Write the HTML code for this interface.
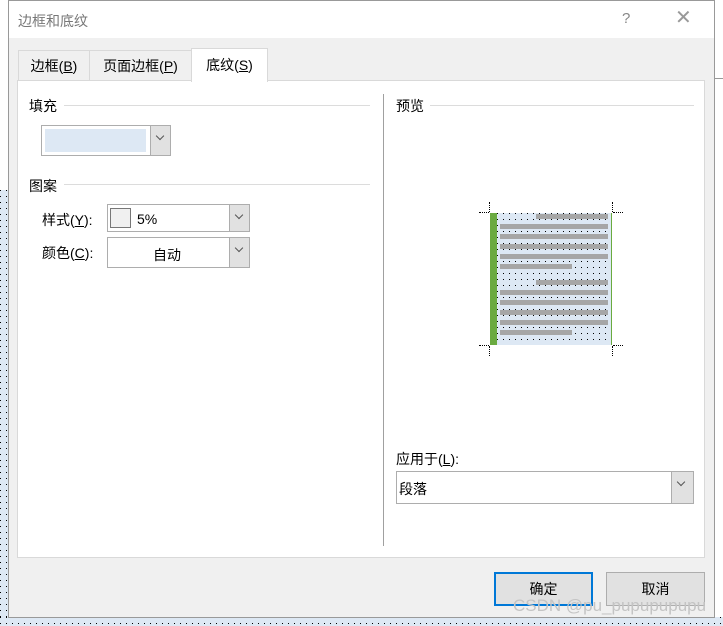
<!DOCTYPE html>
<html><head><meta charset="utf-8"><style>
*{margin:0;padding:0;box-sizing:border-box}
body{width:723px;height:626px;position:relative;overflow:hidden;background:#fff;font-family:"Liberation Sans","Noto Sans CJK SC",sans-serif;font-size:14px;color:#000}
.a{position:absolute}
.dots{background-color:#dde8f4;background-image:linear-gradient(#000,#000);background-size:1px 1px;background-repeat:no-repeat}
.dots{background-image:radial-gradient(circle at 0.5px 0.5px,#000 0.5px,transparent 0.6px);background-size:6px 6px;background-repeat:repeat}
.combo{position:absolute;border:1px solid #adadad;background:#fff}
.btn{position:absolute;right:0;top:0;bottom:0;width:20px;background:#e1e1e1;border-left:1px solid #adadad}
.btn:after{content:"";position:absolute;left:6px;top:7px;width:5px;height:5px;border-right:1px solid #555;border-bottom:1px solid #555;transform:rotate(45deg)}
.bar{position:absolute;height:5px;background:#a6a6a6}
</style></head><body>
<div class="a dots" style="left:0;top:190px;width:8px;height:436px"></div>
<div class="a dots" style="left:0;top:617px;width:723px;height:9px"></div>
<div class="a" style="left:714px;top:78px;width:9px;height:1px;background:#999"></div>
<div class="a" style="left:8px;top:0;width:707px;height:618px;border:1px solid #999;background:#f0f0f0">
 <div class="a" style="left:0;top:0;width:705px;height:37px;background:#fff"></div>
 <div class="a" style="left:9px;top:10px;font-size:14px;color:#777">边框和底纹</div>
 <div class="a" style="left:613px;top:9px;color:#888;font-size:15px">?</div>
 <div class="a" style="left:666px;top:6px;color:#999;font-size:20px;line-height:22px">✕</div>
</div>
<div class="a" style="left:18px;top:50px;width:72px;height:31px;border:1px solid #d9d9d9;border-bottom:none;background:#f0f0f0;text-align:center;line-height:31px">边框(<u>B</u>)</div>
<div class="a" style="left:89px;top:50px;width:103px;height:31px;border:1px solid #d9d9d9;border-bottom:none;background:#f0f0f0;text-align:center;line-height:31px">页面边框(<u>P</u>)</div>
<div class="a" style="left:17px;top:80px;width:688px;height:478px;border:1px solid #d9d9d9;background:#fff"></div>
<div class="a" style="left:191px;top:48px;width:77px;height:34px;border:1px solid #d9d9d9;border-bottom:none;background:#fff;text-align:center;line-height:33px">底纹(<u>S</u>)</div>
<div class="a" style="left:29px;top:96px">填充</div>
<div class="a" style="left:64px;top:105px;width:306px;height:1px;background:#dcdcdc"></div>
<div class="combo" style="left:41px;top:125px;width:130px;height:31px"><div class="a" style="left:3px;top:3px;width:101px;height:23px;background:#dde8f4"></div><div class="btn"></div></div>
<div class="a" style="left:29px;top:176px">图案</div>
<div class="a" style="left:64px;top:184px;width:306px;height:1px;background:#dcdcdc"></div>
<div class="a" style="left:42px;top:210px">样式(<u>Y</u>):</div>
<div class="combo" style="left:107px;top:204px;width:143px;height:28px"><div class="a" style="left:2px;top:3px;width:21px;height:20px;border:1px solid #777;background:#f0f0f0"></div><div class="a" style="left:29px;top:6px">5%</div><div class="btn"></div></div>
<div class="a" style="left:42px;top:243px">颜色(<u>C</u>):</div>
<div class="combo" style="left:107px;top:237px;width:143px;height:31px"><div class="a" style="left:45px;top:7px">自动</div><div class="btn"></div></div>
<div class="a" style="left:383px;top:94px;width:1px;height:452px;background:#a0a0a0"></div>
<div class="a" style="left:396px;top:96px">预览</div>
<div class="a" style="left:430px;top:105px;width:264px;height:1px;background:#dcdcdc"></div>
<div class="a dots" style="left:497px;top:213px;width:114px;height:132px"></div>
<div class="a" style="left:490px;top:213px;width:7px;height:132px;background:#6aaa40"></div>
<div class="a" style="left:611px;top:213px;width:1px;height:132px;background:#6aaa40"></div>
<div class="bar" style="left:536px;top:214px;width:72px"></div>
<div class="bar" style="left:500px;top:224px;width:108px"></div>
<div class="bar" style="left:500px;top:234px;width:108px"></div>
<div class="bar" style="left:500px;top:244px;width:108px"></div>
<div class="bar" style="left:500px;top:254px;width:108px"></div>
<div class="bar" style="left:500px;top:264px;width:72px"></div>
<div class="bar" style="left:536px;top:280px;width:72px"></div>
<div class="bar" style="left:500px;top:290px;width:108px"></div>
<div class="bar" style="left:500px;top:300px;width:108px"></div>
<div class="bar" style="left:500px;top:310px;width:108px"></div>
<div class="bar" style="left:500px;top:320px;width:108px"></div>
<div class="bar" style="left:500px;top:330px;width:72px"></div>
<div class="a" style="left:479px;top:212px;width:10px;border-top:1px dotted #000"></div>
<div class="a" style="left:489px;top:202px;height:10px;border-left:1px dotted #000"></div>
<div class="a" style="left:613px;top:212px;width:10px;border-top:1px dotted #000"></div>
<div class="a" style="left:612px;top:202px;height:10px;border-left:1px dotted #000"></div>
<div class="a" style="left:479px;top:345px;width:10px;border-top:1px dotted #000"></div>
<div class="a" style="left:489px;top:346px;height:10px;border-left:1px dotted #000"></div>
<div class="a" style="left:613px;top:345px;width:10px;border-top:1px dotted #000"></div>
<div class="a" style="left:612px;top:346px;height:10px;border-left:1px dotted #000"></div>
<div class="a" style="left:396px;top:449px">应用于(<u>L</u>):</div>
<div class="combo" style="left:396px;top:471px;width:298px;height:33px"><div class="a" style="left:2px;top:7px">段落</div><div class="btn" style="width:22px"></div></div>
<div class="a" style="left:494px;top:572px;width:99px;height:34px;border:2px solid #0078d7;background:#e1e1e1;text-align:center;line-height:30px">确定</div>
<div class="a" style="left:606px;top:572px;width:99px;height:34px;border:1px solid #adadad;background:#e1e1e1;text-align:center;line-height:32px">取消</div>
<div class="a" style="left:513px;top:596px;color:#c4c4c4;font-size:17px">CSDN @pu_pupupupupu</div>
</body></html>
